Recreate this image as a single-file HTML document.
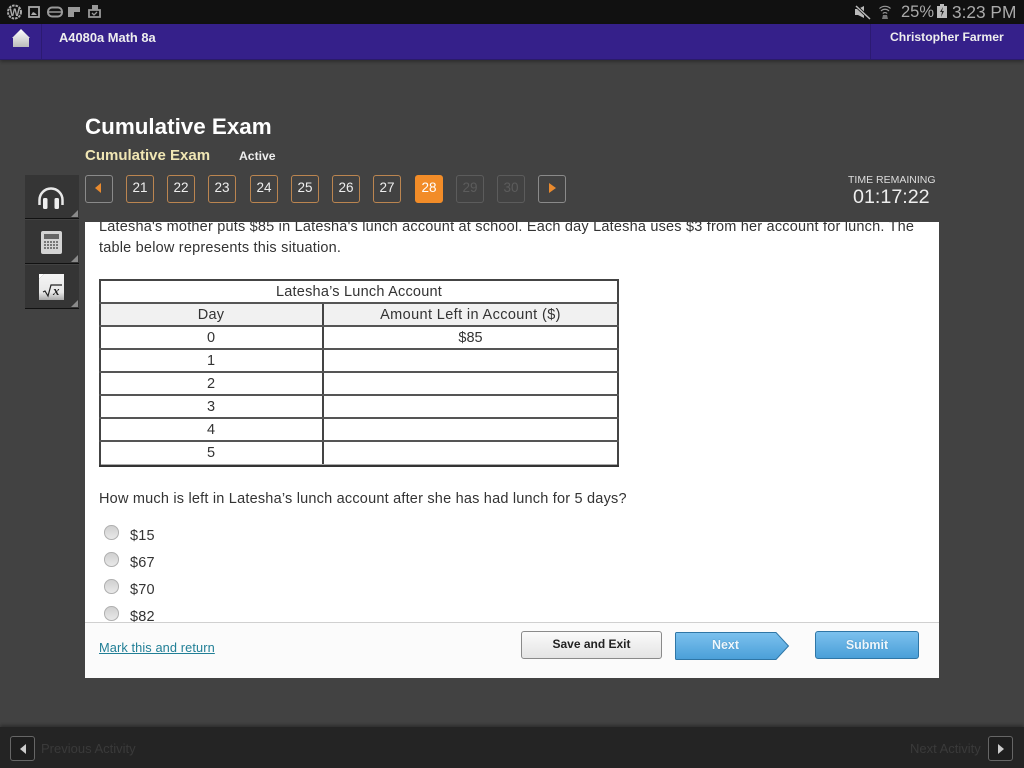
<!DOCTYPE html>
<html><head><meta charset="utf-8">
<style>
html,body{margin:0;padding:0;width:1024px;height:768px;overflow:hidden;background:#424242;font-family:"Liberation Sans",sans-serif}
.a{position:absolute;white-space:nowrap}
.n{position:absolute;top:175px;width:26px;height:26px;border:1px solid #bb8550;border-radius:3px;color:#eee;font-size:13.5px;line-height:24px;text-align:center}
.t{position:absolute;left:0;width:100%;text-align:center;color:#333;font-size:14.5px}
.r{position:absolute;left:104px;width:14.5px;height:14.5px;border-radius:50%;background:linear-gradient(#d0d0d0,#e8e8e8);border:1px solid #b0b0b0;box-sizing:border-box}
.o{position:absolute;left:130px;color:#333;font-size:14.5px;letter-spacing:.2px;white-space:nowrap}
.s{position:absolute;left:25px;width:54px;height:42px;background:#353535;border-bottom:1px solid #111}
.c{position:absolute;right:1px;bottom:1px;width:0;height:0;border-left:7px solid transparent;border-bottom:7px solid #8a8a8a}
</style></head><body>
<div class="a" style="left:0;top:0;width:1024px;height:24px;background:#111"></div>
<svg class="a" style="left:0;top:0" width="110" height="24">
<circle cx="14.500" cy="12" r="6.500" fill="none" stroke="#aaa" stroke-width="2" stroke-dasharray="2.500 1"/><text x="9.500" y="16" font-size="11" font-weight="bold" fill="#aaa" font-family="Liberation Sans">W</text>
<rect x="29" y="7" width="10" height="10" fill="none" stroke="#aaa" stroke-width="1.800"/><path d="M31 15l2-3 2 1 2 2z" fill="#aaa"/>
<rect x="48" y="7.500" width="14" height="9" rx="4" fill="none" stroke="#999" stroke-width="2"/><path d="M49 12h12" stroke="#999" stroke-width="1.500"/>
<path d="M68 7h12v5h-6v5h-6z" fill="#999"/>
<path d="M89 10h11v7h-11z" fill="none" stroke="#999" stroke-width="1.800"/><path d="M92 13l2 2 3-3" fill="none" stroke="#999" stroke-width="1.300"/><rect x="92" y="5" width="6" height="5" fill="#999"/>
</svg>
<svg class="a" style="left:850px;top:3px" width="50" height="18">
<path d="M5 6h3l6-3v12l-6-3H5z" fill="#bbb"/><path d="M5 2l15 14" stroke="#111" stroke-width="3"/><path d="M6 3l14 13" stroke="#bbb" stroke-width="1.500"/>
<path d="M29.500 5.500a8 8 0 0 1 11 0M31 8a5.500 5.500 0 0 1 8 0M32.800 10.500a3 3 0 0 1 4.400 0" fill="none" stroke="#999" stroke-width="1.200"/><path d="M33 12h4l1 4h-6z" fill="#777"/>
</svg>
<div class="a" style="left:901px;top:2px;color:#aaa;font-size:16.500px;line-height:20px">25%</div>
<svg class="a" style="left:937px;top:4px" width="10" height="14"><rect x="3" y="0" width="4" height="2" fill="#bbb"/><rect x="0" y="2" width="10" height="12" fill="#bbb"/><path d="M6 3L3 8h2l-1 5 3-6H5z" fill="#222"/></svg>
<div class="a" style="left:952px;top:2px;color:#aaa;font-size:17.300px;line-height:20px">3:23 PM</div>

<div class="a" style="left:0;top:24px;width:1024px;height:35px;background:#35208a;border-bottom:1px solid #2a1a6c;box-shadow:0 2px 3px rgba(0,0,0,.3)"></div>
<div class="a" style="left:41px;top:24px;width:1px;height:35px;background:#2c1a72"></div>
<div class="a" style="left:870px;top:24px;width:1px;height:35px;background:#2c1a72"></div>
<svg class="a" style="left:11px;top:28px" width="20" height="20"><defs><linearGradient id="h" x1="0" y1="0" x2="0" y2="1"><stop offset="0" stop-color="#fff"/><stop offset="1" stop-color="#bbb"/></linearGradient></defs><path d="M10 1L19 10H18V19H2V10H1z" fill="url(#h)"/></svg>
<div class="a" style="left:59px;top:30px;color:#eee;font-size:12.900px;font-weight:bold;line-height:15px">A4080a Math 8a</div>
<div class="a" style="left:890px;top:30px;color:#eee;font-size:12.200px;font-weight:bold;line-height:15px">Christopher Farmer</div>

<div class="a" style="left:85px;top:112px;color:#fff;font-size:22.400px;font-weight:bold;line-height:30px">Cumulative Exam</div>
<div class="a" style="left:85px;top:146px;color:#f0e6b4;font-size:15px;font-weight:bold;line-height:19px">Cumulative Exam</div>
<div class="a" style="left:239px;top:149px;color:#eee;font-size:12.200px;font-weight:bold;line-height:15px">Active</div>

<div class="n" style="left:85px;border-color:#8a8a8a"><span style="display:block;position:absolute;left:9px;top:7px;border:5.500px solid transparent;border-left:0;border-right:6px solid #e98a2e"></span></div>
<div class="n" style="left:126px">21</div><div class="n" style="left:167px">22</div><div class="n" style="left:208px">23</div><div class="n" style="left:250px">24</div><div class="n" style="left:291px">25</div><div class="n" style="left:332px">26</div><div class="n" style="left:373px">27</div>
<div class="n" style="left:415px;background:#f28c28;border-color:#f28c28;color:#fff">28</div>
<div class="n" style="left:456px;border-color:#5c5c5c;color:#5c5c5c">29</div>
<div class="n" style="left:497px;border-color:#5c5c5c;color:#5c5c5c">30</div>
<div class="n" style="left:538px;border-color:#8a8a8a"><span style="display:block;position:absolute;left:10px;top:7px;border:5.500px solid transparent;border-right:0;border-left:7px solid #e98a2e"></span></div>

<div class="a" style="left:848px;top:173px;color:#ddd;font-size:10.500px;line-height:14px">TIME REMAINING</div>
<div class="a" style="left:853px;top:185px;color:#eee;font-size:19.700px;line-height:24px">01:17:22</div>

<div class="s" style="top:175px;height:43px"><div class="c"></div>
<svg style="position:absolute;left:13px;top:10px" width="28" height="26"><path d="M1.500 20V15a11.500 11.500 0 0 1 23 0V20" fill="none" stroke="#e8e8e8" stroke-width="2.500"/><rect x="5" y="13" width="4.500" height="11" rx="1.500" fill="#eee"/><rect x="16.500" y="13" width="4.500" height="11" rx="1.500" fill="#eee"/></svg></div>
<div class="s" style="top:220px;height:43px"><div class="c"></div>
<svg style="position:absolute;left:16px;top:11px" width="22" height="24"><rect width="21" height="23" rx="2" fill="#d4d4d4"/><rect x="3" y="3" width="15" height="5" fill="#666"/><path d="M3 11h15M3 14h15M3 17h15" stroke="#777" stroke-width="2" stroke-dasharray="2 1"/></svg></div>
<div class="s" style="top:265px;height:43px"><div class="c"></div>
<svg style="position:absolute;left:14px;top:9px" width="26" height="27"><defs><linearGradient id="q" x1="0" y1="0" x2="0" y2="1"><stop offset="0" stop-color="#f4f4f4"/><stop offset=".7" stop-color="#e8e8e8"/><stop offset="1" stop-color="#aaa"/></linearGradient></defs><path d="M5 0H25V26H0V5z" fill="url(#q)"/><path d="M0 0h5L0 5z" fill="#fff"/><path d="M4 18l2-1 3 5 3-11h11" fill="none" stroke="#222" stroke-width="1.200"/><text x="14" y="21" font-size="13" font-style="italic" font-weight="bold" font-family="Liberation Serif" fill="#222">x</text></svg></div>

<div class="a" style="left:85px;top:222px;width:854px;height:456px;background:#fff;overflow:hidden">
<div class="a" style="left:14px;top:-6px;color:#333;font-size:14.500px;line-height:21px;letter-spacing:.2px;transform:translateY(1px)">Latesha's mother puts $85 in Latesha's lunch account at school. Each day Latesha uses $3 from her account for lunch. The<br>table below represents this situation.</div>
</div>

<div class="a" style="left:99px;top:279px;width:520px;height:188px;background:#fff">
<div class="a" style="left:0;top:25px;width:520px;height:22px;background:#f1f1f1"></div>
<div class="a" style="left:0;top:0;width:2px;height:188px;background:#444"></div>
<div class="a" style="left:518px;top:0;width:2px;height:188px;background:#444"></div>
<div class="a" style="left:223px;top:24px;width:2px;height:161px;background:#444"></div>
<div class="a" style="left:0;top:0;width:520px;height:2px;background:#444"></div>
<div class="a" style="left:0;top:23px;width:520px;height:2px;background:#555"></div>
<div class="a" style="left:0;top:46px;width:520px;height:2px;background:#555"></div>
<div class="a" style="left:0;top:69px;width:520px;height:2px;background:#555"></div>
<div class="a" style="left:0;top:92px;width:520px;height:2px;background:#555"></div>
<div class="a" style="left:0;top:115px;width:520px;height:2px;background:#555"></div>
<div class="a" style="left:0;top:138px;width:520px;height:2px;background:#555"></div>
<div class="a" style="left:0;top:161px;width:520px;height:2px;background:#555"></div>
<div class="a" style="left:2px;top:185px;width:516px;height:1px;background:#aaa"></div>
<div class="a" style="left:0;top:186px;width:520px;height:2px;background:#333"></div>
<div class="t" style="top:4px;line-height:18px;letter-spacing:.22px">Latesha’s Lunch Account</div>
<div class="t" style="top:27px;line-height:18px;left:0;width:224px;letter-spacing:.2px">Day</div>
<div class="t" style="top:27px;line-height:18px;left:224px;width:295px;letter-spacing:.38px">Amount Left in Account ($)</div>
<div class="t" style="top:50px;line-height:18px;left:0;width:224px">0</div>
<div class="t" style="top:50px;line-height:18px;left:224px;width:295px">$85</div>
<div class="t" style="top:73px;line-height:18px;left:0;width:224px">1</div>
<div class="t" style="top:96px;line-height:18px;left:0;width:224px">2</div>
<div class="t" style="top:119px;line-height:18px;left:0;width:224px">3</div>
<div class="t" style="top:142px;line-height:18px;left:0;width:224px">4</div>
<div class="t" style="top:165px;line-height:18px;left:0;width:224px">5</div>
</div>

<div class="a" style="left:99px;top:489px;color:#333;font-size:14.500px;line-height:20px;letter-spacing:.205px">How much is left in Latesha’s lunch account after she has had lunch for 5 days?</div>
<div class="r" style="top:525px"></div><div class="o" style="top:526px;line-height:20px">$15</div>
<div class="r" style="top:552px"></div><div class="o" style="top:553px;line-height:20px">$67</div>
<div class="r" style="top:579px"></div><div class="o" style="top:580px;line-height:20px">$70</div>
<div class="r" style="top:606px"></div>

<div class="a" style="left:85px;top:607px;width:854px;height:15px;overflow:hidden"><div class="o" style="left:45px;top:0;line-height:20px">$82</div></div>

<div class="a" style="left:85px;top:622px;width:854px;height:56px;background:#fbfbfb;border-top:1px solid #d0d0d0;box-sizing:border-box"></div>
<div class="a" style="left:99px;top:640px;color:#217f96;font-size:12.800px;line-height:16px;text-decoration:underline;letter-spacing:.1px">Mark this and return</div>
<div class="a" style="left:521px;top:631px;width:141px;height:28px;box-sizing:border-box;border:1px solid #8a8a8a;border-radius:3px;background:linear-gradient(#fafafa,#e4e4e4);color:#222;font-size:12px;font-weight:bold;line-height:25px;text-align:center">Save and Exit</div>
<svg class="a" style="left:675px;top:632px" width="115" height="29"><defs><linearGradient id="b" x1="0" y1="0" x2="0" y2="1"><stop offset="0" stop-color="#7cc1ee"/><stop offset="1" stop-color="#4a9fd8"/></linearGradient></defs><path d="M1.500 .500H101L113.500 14 101 27.500H1.500a1 1 0 0 1-1-1V1.500a1 1 0 0 1 1-1z" fill="url(#b)" stroke="#2f76a6"/></svg>
<div class="a" style="left:675px;top:631px;width:101px;color:#eef7fd;font-size:12.500px;font-weight:bold;line-height:28px;text-align:center;text-shadow:0 0 1px #2f76a6">Next</div>
<div class="a" style="left:815px;top:631px;width:104px;height:28px;box-sizing:border-box;border:1px solid #2f76a6;border-radius:3px;background:linear-gradient(#7cc1ee,#4a9fd8);color:#eef7fd;font-size:12.500px;font-weight:bold;line-height:26px;text-align:center;text-shadow:0 0 1px #2f76a6">Submit</div>

<div class="a" style="left:0;top:727px;width:1024px;height:41px;background:#242424;box-shadow:0 -2px 3px rgba(0,0,0,.3)"></div>
<div class="a" style="left:10px;top:736px;width:25px;height:25px;box-sizing:border-box;border:1px solid #666;border-radius:3px;background:#1e1e1e"><span style="position:absolute;left:9px;top:7px;border:5px solid transparent;border-left:0;border-right:6px solid #ccc"></span></div>
<div class="a" style="left:41px;top:741px;color:#3a3a3a;font-size:13px;line-height:16px">Previous Activity</div>
<div class="a" style="left:910px;top:741px;color:#3a3a3a;font-size:13px;line-height:16px">Next Activity</div>
<div class="a" style="left:988px;top:736px;width:25px;height:25px;box-sizing:border-box;border:1px solid #666;border-radius:3px;background:#1e1e1e"><span style="position:absolute;left:9px;top:7px;border:5px solid transparent;border-right:0;border-left:6px solid #ccc"></span></div>
</body></html>
